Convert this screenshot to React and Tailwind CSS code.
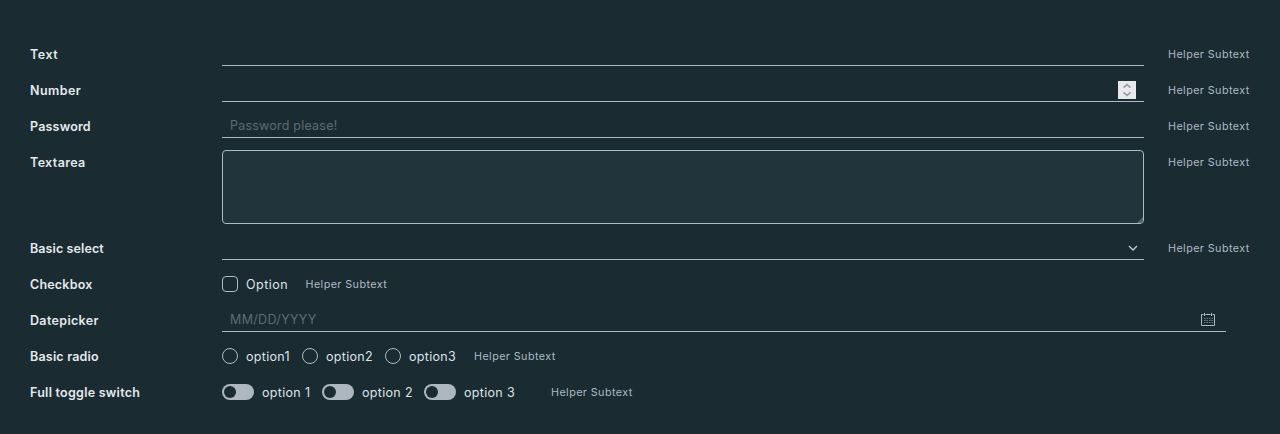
const line = 'shrink-0 border-b border-[#adbbc4]';

function Row({ label, tracking = 'tracking-normal', height = 'h-6', children }) {
  return (
    <div className={`flex ${height}`}>
      <div className={`w-48 shrink-0 whitespace-nowrap text-[12.5px] leading-[25px] font-semibold text-[#e3eaed] ${tracking}`}>
        {label}
      </div>
      {children}
    </div>
  );
}

function Helper({ className = 'ml-6' }) {
  return (
    <span className={`shrink-0 whitespace-nowrap text-[10.75px] leading-[25px] tracking-[0.43px] text-[#adbbc4] ${className}`}>
      Helper Subtext
    </span>
  );
}

function Option({ children, width, shape, tracking = 'tracking-[0.32px]' }) {
  return (
    <label className={`flex h-6 shrink-0 items-center whitespace-nowrap text-[12.5px] leading-6 text-[#dce4e8] ${width}`}>
      {shape}
      <span className={`ml-2 pt-0.5 ${tracking}`}>{children}</span>
    </label>
  );
}

const Radio = () => <span className="size-4 shrink-0 rounded-full border border-[#adbbc4]" />;

const Toggle = () => (
  <span className="flex h-4 w-8 shrink-0 items-center rounded-full bg-[#adb7bf] pl-0.5">
    <span className="size-3 rounded-full bg-[#1b2b32]" />
  </span>
);

export default function App() {
  return (
    <form className="flex h-[434px] w-[1280px] flex-col gap-3 bg-[#1b2b32] px-[30px] pt-[42px] font-['Inter',sans-serif]">
      <Row label="Text" tracking="tracking-[0.5px]">
        <div className={`w-[922px] ${line}`} />
        <Helper />
      </Row>
      <Row label="Number" tracking="tracking-[0.45px]">
        <div className={`flex w-[922px] justify-end pt-[3px] pr-2 ${line}`}>
          <svg className="size-[18px] bg-[#e9e9ed]" viewBox="0 0 18 18" fill="none" stroke="#9a9aa6" strokeWidth="1.6">
            <path d="M5.5 6.7 9 3.6l3.5 3.1M5.5 11.3 9 14.4l3.5-3.1" />
          </svg>
        </div>
        <Helper />
      </Row>
      <Row label="Password" tracking="tracking-[0.2px]">
        <div className={`w-[922px] px-2 text-[12.5px] leading-6 tracking-[0.22px] text-[#5d6c74] ${line}`}>Password please!</div>
        <Helper />
      </Row>
      <Row label="Textarea" tracking="tracking-[0.36px]" height="h-[74px]">
        <div className="flex w-[922px] shrink-0 items-end justify-end overflow-hidden rounded-[4px] border border-[#adbbc4] bg-[#21333b]">
          <svg className="size-1.5" viewBox="0 0 6 6" fill="#54656d">
            <path d="M6 0v6H0z" />
          </svg>
        </div>
        <Helper />
      </Row>
      <Row label="Basic select" tracking="tracking-[0.1px]">
        <div className={`flex w-[922px] items-center justify-end pr-[6px] ${line}`}>
          <svg className="h-2.5 w-2.5" viewBox="0 0 10 10" fill="none" stroke="#c3cdd4" strokeWidth="1.3">
            <path d="m1 3 4 4 4-4" />
          </svg>
        </div>
        <Helper />
      </Row>
      <Row label="Checkbox" tracking="tracking-[0.2px]">
        <Option
          width="w-[83.5px]"
          tracking="tracking-[0.5px]"
          shape={<span className="size-4 shrink-0 rounded-[4px] border border-[#adbbc4]" />}
        >
          Option
        </Option>
        <Helper className="" />
      </Row>
      <Row label="Datepicker" tracking="tracking-[0.34px]">
        <div className={`flex w-[1004px] justify-between pr-[11px] pl-2 text-[12.5px] leading-6 text-[#5d6c74] ${line}`}>
          <span className="tracking-[0.34px]">MM/DD/YYYY</span>
          <svg className="mt-[5px] h-[14px] w-[14px]" viewBox="0 0 14 14" fill="none" stroke="#adbbc4">
            <path d="M2.5 1.5h-2v11h13v-11h-2M4.5 1.5h5M3.5 0v3M10.5 0v3" />
            <path d="M3 5.5h9M3 7.5h9M3 9.5h9" strokeDasharray="1.5 1" opacity=".55" />
          </svg>
        </div>
      </Row>
      <Row label="Basic radio" tracking="tracking-[0.2px]">
        <Option width="w-20" shape={<Radio />}>option1</Option>
        <Option width="w-[83px]" shape={<Radio />}>option2</Option>
        <Option width="w-[89px]" shape={<Radio />}>option3</Option>
        <Helper className="" />
      </Row>
      <Row label="Full toggle switch" tracking="tracking-[0.26px]">
        <Option width="w-[100px]" shape={<Toggle />}>option 1</Option>
        <Option width="w-[102px]" shape={<Toggle />}>option 2</Option>
        <Option width="w-[127px]" shape={<Toggle />}>option 3</Option>
        <Helper className="" />
      </Row>
    </form>
  );
}
